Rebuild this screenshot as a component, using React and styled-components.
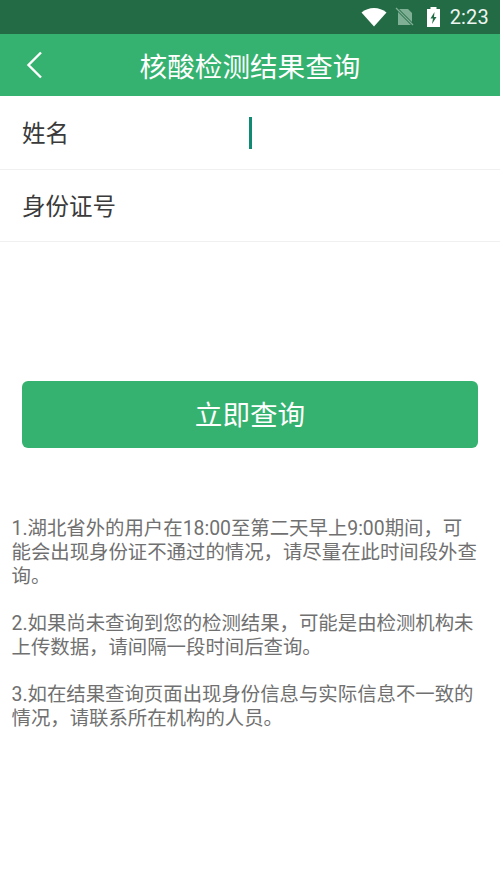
import styled, { createGlobalStyle } from "styled-components";

const GlobalStyle = createGlobalStyle`
  html, body {
    margin: 0;
    padding: 0;
    background: #fff;
    font-family: Roboto, "Noto Sans CJK SC", sans-serif;
  }
  * { box-sizing: border-box; }
`;

const Page = styled.div`
  width: 500px;
  height: 890px;
  overflow: hidden;
  background: #fff;
`;

const StatusBar = styled.div`
  height: 34px;
  background: #226b45;
  display: flex;
  align-items: center;
  justify-content: flex-end;
  padding-right: 11px;
  color: #eef5f0;
`;

const Clock = styled.span`
  font-size: 20px;
  margin-left: 9px;
  letter-spacing: 0.2px;
`;

const StatusIcon = styled.svg`
  display: block;
  margin-left: ${(p) => p.$gap || 0}px;
`;

const Header = styled.header`
  height: 62px;
  background: #35b26f;
  display: flex;
  align-items: center;
  position: relative;
  justify-content: center;
`;

const BackButton = styled.svg`
  position: absolute;
  left: 26px;
  top: 17px;
`;

const Title = styled.h1`
  margin: 0 0 1px;
  font-size: 27.6px;
  font-weight: 400;
  color: #fff;
`;

const Row = styled.div`
  height: ${(p) => p.$height}px;
  display: flex;
  align-items: center;
  padding-left: 22px;
  border-bottom: 1px solid #f0f0f0;
`;

const Label = styled.span`
  width: 227px;
  padding-bottom: 2px;
  font-size: 23.5px;
  color: #3a3a3a;
`;

const Caret = styled.span`
  display: block;
  width: 3px;
  height: 32px;
  background: #108a72;
`;

const SubmitArea = styled.div`
  padding: 139px 22px 0;
`;

const SubmitButton = styled.button`
  display: block;
  width: 100%;
  height: 67px;
  padding: 0 0 4px;
  border: none;
  border-radius: 6px;
  background: #35b26f;
  color: #fff;
  font-family: inherit;
  font-size: 27.6px;
`;

const Notes = styled.div`
  padding: 69px 20px 0 11.5px;
`;

const Note = styled.p`
  margin: 0 0 23px;
  font-size: 19.4px;
  line-height: 24px;
  color: #707070;
`;

const App = () => (
  <Page>
    <GlobalStyle />
    <StatusBar>
      <StatusIcon width="26" height="20" viewBox="0 0 26 20">
        <path d="M0.5 5.5C7.5 -0.5 18.5 -0.5 25.5 5.5L13 19.5Z" fill="#fff" />
      </StatusIcon>
      <StatusIcon $gap={8} width="20" height="20" viewBox="0 0 20 20">
        <path d="M3 2H13L17 6V18H3Z" fill="#7fb096" />
        <path d="M1 1L19 19" stroke="#226b45" strokeWidth="3" />
        <path d="M1 1L18 18" stroke="#7fb096" strokeWidth="1.2" />
      </StatusIcon>
      <StatusIcon $gap={11} width="15" height="22" viewBox="0 0 15 22">
        <path
          d="M4.5 1H10.5V3H14V21H1V3H4.5Z M8.5 6L4.5 12.5H7L6 18L10.5 11H8Z"
          fill="#fff"
          fillRule="evenodd"
        />
      </StatusIcon>
      <Clock>2:23</Clock>
    </StatusBar>
    <Header>
      <BackButton width="18" height="28" viewBox="0 0 18 28">
        <path d="M15 1.5L2.5 14L15 26.5" fill="none" stroke="#fff" strokeWidth="2.4" />
      </BackButton>
      <Title>核酸检测结果查询</Title>
    </Header>
    <Row $height={74}>
      <Label>姓名</Label>
      <Caret />
    </Row>
    <Row $height={72}>
      <Label>身份证号</Label>
    </Row>
    <SubmitArea>
      <SubmitButton>立即查询</SubmitButton>
    </SubmitArea>
    <Notes>
      <Note>1.湖北省外的用户在18:00至第二天早上9:00期间，可能会出现身份证不通过的情况，请尽量在此时间段外查询。</Note>
      <Note>2.如果尚未查询到您的检测结果，可能是由检测机构未上传数据，请间隔一段时间后查询。</Note>
      <Note>3.如在结果查询页面出现身份信息与实际信息不一致的情况，请联系所在机构的人员。</Note>
    </Notes>
  </Page>
);

export default App;
